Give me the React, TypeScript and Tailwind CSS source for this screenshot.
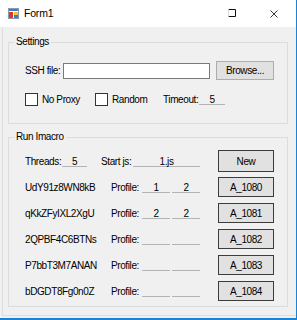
import React from "react";

const font = { fontFamily: '"Liberation Sans", Arial, sans-serif' };

function Under({ w, v }: { w: string; v?: string }) {
  return (
    <span className={`${w} h-[11px] leading-[11px] border-b border-[#b4b4b4] text-center shrink-0`}>{v ?? ""}</span>
  );
}

function Btn({ children, cls }: { children: React.ReactNode; cls: string }) {
  return (
    <div className={`${cls} shrink-0 flex items-center justify-center bg-[#e1e1e1] border border-[#3c3c3c]`}>{children}</div>
  );
}

function Check() {
  return <span className="w-[13px] h-[13px] bg-white border border-[#333333] shrink-0" />;
}

const rows = [
  { name: "UdY91z8WN8kB", a: "1", b: "2", btn: "A_1080" },
  { name: "qKkZFyIXL2XgU", a: "2", b: "2", btn: "A_1081" },
  { name: "2QPBF4C6BTNs", a: "", b: "", btn: "A_1082" },
  { name: "P7bbT3M7ANAN", a: "", b: "", btn: "A_1083" },
  { name: "bDGDT8Fg0n0Z", a: "", b: "", btn: "A_1084" },
];

export default function App() {
  return (
    <div
      className="w-[297px] h-[320px] flex flex-col border-r border-b-2 border-[#1883d7] text-[10px] text-black tracking-[-0.4px] overflow-hidden"
      style={font}
    >
      {/* title bar */}
      <div className="h-[27px] bg-white flex items-center shrink-0">
        <svg width="11" height="11" viewBox="0 0 11 11" className="ml-[8px]">
          <rect x="0.5" y="0.5" width="10" height="10" fill="#ffffff" stroke="#8a9ab0" />
          <rect x="1" y="1" width="9" height="2" fill="#3b7bd6" />
          <rect x="1" y="4" width="4" height="6" fill="#d83a2a" />
          <rect x="6" y="4" width="4" height="3" fill="#f2c230" />
          <rect x="6" y="7" width="4" height="3" fill="#3b7bd6" />
        </svg>
        <span className="ml-[5px] text-[10.5px] tracking-[-0.2px] leading-none">Form1</span>
        <svg width="9" height="9" viewBox="0 0 9 9" className="ml-auto">
          <path d="M0.5 0.5 H7.5 V7.5 H0.5" fill="none" stroke="#111" strokeWidth="1" />
          <path d="M0.5 0.5 V7.5" fill="none" stroke="#dcdcdc" strokeWidth="1" />
        </svg>
        <svg width="8" height="8" viewBox="0 0 8 8" className="ml-[33px] mr-[18px]">
          <path d="M0.5 0.5 L7.5 7.5 M7.5 0.5 L0.5 7.5" stroke="#222" strokeWidth="0.9" />
        </svg>
      </div>

      {/* body */}
      <div className="flex-1 bg-[#f0f0f0] pl-[2px] pb-[2px] flex flex-col">
        <div className="flex-1 border-l border-b border-[#dedede] pl-[5px] pr-[8px] flex flex-col">
          {/* Settings */}
          <fieldset className="mt-[9px] border border-[#dcdcdc]">
            <legend className="ml-[5px] px-[2px] leading-[12px]">Settings</legend>
            <div className="pt-[13px] pb-[17px] pl-[16px] flex flex-col gap-[13px]">
              <div className="h-[19px] flex items-center">
                <span className="w-[38px] shrink-0">SSH file:</span>
                <div className="w-[147px] h-[16px] bg-white border border-[#7a7a7a] shrink-0" />
                <div className="ml-[6px] w-[58px] h-[19px] shrink-0 flex items-center justify-center bg-[#e1e1e1] border border-[#adadad]">
                  Browse...
                </div>
              </div>
              <div className="h-[13px] flex items-center">
                <div className="w-[70px] flex items-center shrink-0">
                  <Check />
                  <span className="ml-[4px]">No Proxy</span>
                </div>
                <div className="w-[68px] flex items-center shrink-0">
                  <Check />
                  <span className="ml-[4px]">Random</span>
                </div>
                <span className="w-[36px] shrink-0">Timeout:</span>
                <Under w="w-[26px]" v="5" />
              </div>
            </div>
          </fieldset>

          {/* Run Imacro */}
          <fieldset className="mt-[7px] border border-[#dcdcdc]">
            <legend className="ml-[5px] px-[2px] leading-[12px]">Run Imacro</legend>
            <div className="pt-[7px] pb-[5px] pl-[16px] flex flex-col">
              <div className="h-[22px] flex items-center">
                <span className="w-[37px] shrink-0">Threads:</span>
                <Under w="w-[25px]" v="5" />
                <span className="ml-[14px] w-[32px] shrink-0">Start js:</span>
                <Under w="w-[67px]" v="1.js" />
                <Btn cls="ml-[18px] w-[56px] h-[22px]">New</Btn>
              </div>
              <div className="mt-[5px] flex flex-col gap-[6px]">
                {rows.map((r) => (
                  <div key={r.btn} className="h-[20px] flex items-center">
                    <span className="w-[86px] shrink-0 whitespace-nowrap">{r.name}</span>
                    <span className="w-[31px] shrink-0">Profile:</span>
                    <Under w="w-[28px]" v={r.a} />
                    <span className="ml-[2px]" />
                    <Under w="w-[28px]" v={r.b} />
                    <Btn cls="ml-[18px] w-[56px] h-[20px]">{r.btn}</Btn>
                  </div>
                ))}
              </div>
            </div>
          </fieldset>
        </div>
      </div>
    </div>
  );
}
